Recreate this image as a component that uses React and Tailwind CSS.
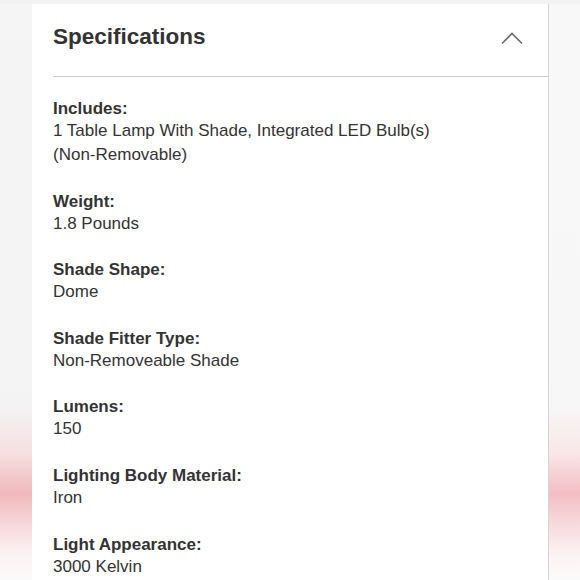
import React from "react";

const specs = [
  { label: "Includes:", value: "1 Table Lamp With Shade, Integrated LED Bulb(s) (Non-Removable)" },
  { label: "Weight:", value: "1.8 Pounds" },
  { label: "Shade Shape:", value: "Dome" },
  { label: "Shade Fitter Type:", value: "Non-Removeable Shade" },
  { label: "Lumens:", value: "150" },
  { label: "Lighting Body Material:", value: "Iron" },
  { label: "Light Appearance:", value: "3000 Kelvin" },
];

function ChevronUp() {
  return (
    <svg width="22" height="14" viewBox="0 0 22 14" fill="none">
      <path d="M1 12.5 L11 2.5 L21 12.5" stroke="#6b6b6b" strokeWidth="1.6" />
    </svg>
  );
}

function App() {
  return (
    <div className="w-[580px] h-[580px] overflow-hidden flex flex-col bg-[#f4f4f4] font-['Liberation_Sans',Arial,sans-serif] text-[#333333]">
      <div className="h-[4px] shrink-0 bg-[#f2f2f2]"></div>
      <div className="flex flex-1 min-h-0">
        {/* left gutter */}
        <div className="w-[32px] shrink-0 bg-[linear-gradient(to_bottom,#f5f5f5_0%,#f3f3f3_70%,#f6dfe0_78%,#f1b8bc_85%,#f7dcde_91%,#fbf4f4_96%,#fafafa_100%)]"></div>

        {/* card */}
        <div className="w-[517px] shrink-0 bg-white border-r border-[#d4d4d4] flex flex-col">
          <div className="flex items-start justify-between pl-[21px] pr-[25px] pt-[19px] pb-[25px]">
            <h2 className="text-[22.5px] leading-[28px] font-bold">Specifications</h2>
            <div className="pt-[8px]">
              <ChevronUp />
            </div>
          </div>
          <div className="ml-[21px] border-t border-[#cccccc]"></div>

          <div className="flex flex-col gap-[23.6px] pl-[21px] pr-[95px] pt-[21px]">
            {specs.map((s) => (
              <div key={s.label}>
                <div className="text-[17px] leading-[21px] font-bold">{s.label}</div>
                <div className="text-[17px] leading-[24px]">{s.value}</div>
              </div>
            ))}
          </div>
        </div>

        {/* right gutter */}
        <div className="flex-1 bg-[linear-gradient(to_bottom,#f8f8f8_0%,#f7f7f7_70%,#f9e6e7_78%,#f2bfc3_85%,#f7dde0_91%,#fbf4f4_96%,#fbfbfb_100%)]"></div>
      </div>
    </div>
  );
}

export default App;
